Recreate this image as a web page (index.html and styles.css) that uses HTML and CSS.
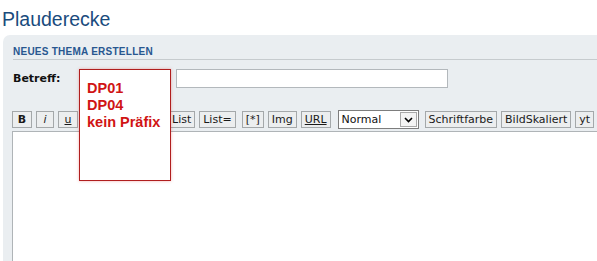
FILE: index.html
```html
<!DOCTYPE html>
<html lang="de">
<head>
<meta charset="utf-8">
<title>Plauderecke</title>
<link rel="stylesheet" href="styles.css">
</head>
<body>
<div class="page">
  <h1 class="title">Plauderecke</h1>
  <div class="panel">
    <h3 class="panel-head">NEUES THEMA ERSTELLEN</h3>
    <div class="subject-row">
      <label class="subject-label" for="subject">Betreff:</label>
      <input class="subject-input" id="subject" type="text">
    </div>
    <div class="toolbar">
      <span class="btn btn-b">B</span>
      <span class="btn btn-i">i</span>
      <span class="btn btn-u">u</span>
      <span class="btn btn-hidden">Zitat</span>
      <span class="btn btn-hidden">Code</span>
      <span class="btn">List</span>
      <span class="btn">List=</span>
      <span class="btn btn-star">[*]</span>
      <span class="btn">Img</span>
      <span class="btn btn-ul">URL</span>
      <span class="fake-select">
        <span class="fake-select-text">Normal</span>
        <span class="fake-select-arrow"><svg width="9" height="6" viewBox="0 0 9 6"><path d="M1 1 L4.5 4.5 L8 1" fill="none" stroke="#000" stroke-width="1.6"/></svg></span>
      </span>
      <span class="btn">Schriftfarbe</span>
      <span class="btn">BildSkaliert</span>
      <span class="btn">yt</span>
    </div>
    <textarea class="editor"></textarea>
    <div class="prefix-popup">DP01<br>DP04<br>kein Präfix</div>
  </div>
</div>
</body>
</html>
```
FILE: styles.css
```css
html, body {
  margin: 0;
  padding: 0;
  background: #ffffff;
  overflow: hidden;
}

.page {
  padding-left: 3px;
}

.title {
  margin: 7px 0 4px -1px;
  font-family: "Liberation Sans", Arial, sans-serif;
  font-weight: normal;
  font-size: 19.5px;
  line-height: 24px;
  color: #1a4b7d;
}

.panel {
  position: relative;
  margin-right: -40px;
  min-height: 260px;
  background: #eaeef1;
  border-radius: 7px 7px 0 0;
  padding: 11px 0 0 10px;
}

.panel-head {
  margin: 0;
  padding-bottom: 1px;
  border-bottom: 1px solid #c6cbce;
  font-family: "Liberation Sans", Arial, sans-serif;
  font-weight: bold;
  font-size: 10px;
  letter-spacing: 0.25px;
  line-height: 12px;
  color: #285790;
}

.subject-row {
  display: grid;
  grid-template-columns: 163px 272px;
  align-items: center;
  margin-top: 9px;
}

.subject-label {
  font-family: "DejaVu Sans", Verdana, sans-serif;
  font-weight: bold;
  font-size: 11px;
  color: #111111;
}

.subject-input {
  box-sizing: border-box;
  width: 272px;
  height: 19px;
  margin: 0;
  border: 1px solid #b3b8bc;
  background: #ffffff;
  padding: 0 3px;
}

.toolbar {
  display: flex;
  align-items: center;
  gap: 4px;
  margin: 22px 0 0 -1px;
  height: 19px;
}

.btn {
  box-sizing: border-box;
  height: 17px;
  padding: 0 3px;
  border: 1px solid #a4a8aa;
  background: #eceeef;
  font-family: "DejaVu Sans", Verdana, sans-serif;
  font-size: 11px;
  line-height: 15px;
  color: #1a1a1a;
  text-align: center;
  white-space: nowrap;
}

.btn-b {
  width: 20px;
  font-weight: bold;
}

.btn-i {
  width: 18px;
  font-style: italic;
}

.btn-u {
  width: 20px;
  text-decoration: underline;
}

.btn-hidden {
  width: 39px;
}

.btn-star {
  margin-left: 2px;
}

.btn-ul {
  text-decoration: underline;
}

.fake-select {
  box-sizing: border-box;
  display: flex;
  align-items: center;
  justify-content: space-between;
  width: 81px;
  height: 19px;
  margin: 0 2px 0 3px;
  padding: 0 1px 0 3px;
  border: 1px solid #7d7d7d;
  background: #ffffff;
  font-family: "DejaVu Sans", Verdana, sans-serif;
  font-size: 11px;
  color: #111111;
}

.fake-select-arrow {
  box-sizing: border-box;
  display: flex;
  align-items: center;
  justify-content: center;
  width: 17px;
  height: 15px;
  border: 1px solid #a9a9a9;
  background: #f4f4f4;
}

.editor {
  display: block;
  box-sizing: border-box;
  width: 700px;
  height: 200px;
  margin: 2px 0 0 -1px;
  border: 1px solid #afb4b7;
  background: #ffffff;
  resize: none;
}

.prefix-popup {
  position: absolute;
  left: 76px;
  top: 34px;
  box-sizing: border-box;
  width: 92px;
  height: 112px;
  padding: 10px 0 0 7px;
  border: 1px solid #b01e1e;
  background: #ffffff;
  box-shadow: 0 0 3px rgba(220, 40, 40, 0.35);
  font-family: "Liberation Sans", Arial, sans-serif;
  font-weight: bold;
  font-size: 14.5px;
  line-height: 17px;
  color: #d01414;
}
```
